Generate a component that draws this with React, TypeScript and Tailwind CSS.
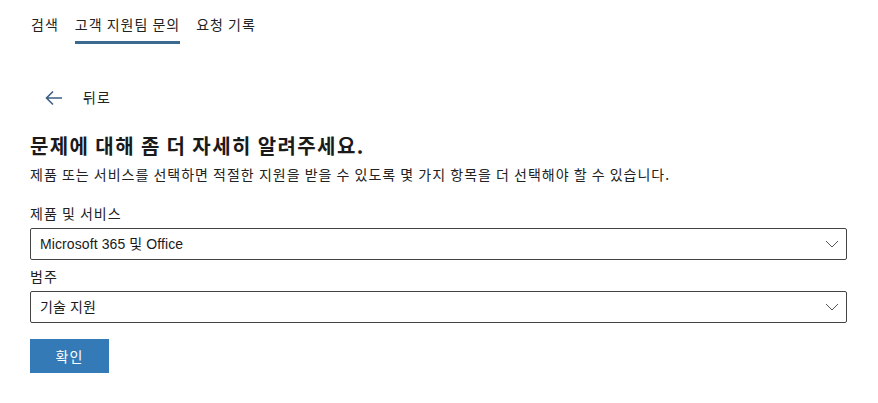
import React, { useState } from 'react';

const font = { fontFamily: '"Noto Sans CJK KR", "Noto Sans", sans-serif' };

const Chevron: React.FC = () => (
  <svg width="14" height="8" viewBox="0 0 14 8" fill="none" className="text-[#555]">
    <path d="M1 1l6 6 6-6" stroke="currentColor" strokeWidth="1" />
  </svg>
);

const SelectBox: React.FC<{ value: string }> = ({ value }) => (
  <div className="flex h-[32px] items-center justify-between rounded-[2px] border border-[#444] px-[9px] text-[14px] text-[#1a1a1a]">
    <span className="font-['Liberation_Sans','Noto_Sans_CJK_KR',sans-serif] tracking-[0.1px]">{value}</span>
    <span className="mr-[-2px]">
      <Chevron />
    </span>
  </div>
);

export default function App() {
  const [tab] = useState('contact');

  const tabs = [
    { id: 'search', label: '검색' },
    { id: 'contact', label: '고객 지원팀 문의' },
    { id: 'history', label: '요청 기록' },
  ];

  return (
    <div className="min-h-[403px] w-[878px] bg-white text-[#1f1f1f]" style={font}>
      <nav className="flex gap-[16px] pl-[31px] pt-[14px]">
        {tabs.map((t) => (
          <div
            key={t.id}
            className={
              'pb-[7px] text-[14px] leading-[20px] tracking-[1px] text-[#222] border-b-[3px] ' +
              (tab === t.id ? 'border-[#3c6a8f]' : 'border-transparent')
            }
          >
            {t.label}
          </div>
        ))}
      </nav>

      <div className="px-[30px] pr-[31px]">
        <button className="mt-[43px] flex items-center gap-[20px] pl-[15px] text-[14px] tracking-[1px] text-[#222]">
          <svg width="18" height="16" viewBox="0 0 18 16" fill="none" className="text-[#3b5f82]">
            <path d="M17 8H2M8 1.5L1.5 8 8 14.5" stroke="currentColor" strokeWidth="1.6" />
          </svg>
          <span>뒤로</span>
        </button>

        <h1 className="mt-[25px] text-[20px] font-bold leading-[26px] tracking-[1.4px] text-[#1a1a1a]">
          문제에 대해 좀 더 자세히 알려주세요.
        </h1>
        <p className="mt-[5px] text-[14px] leading-[20px] tracking-[1px] text-[#222]">
          제품 또는 서비스를 선택하면 적절한 지원을 받을 수 있도록 몇 가지 항목을 더 선택해야 할 수 있습니다.
        </p>

        <label className="mt-[19px] block text-[14px] leading-[20px] tracking-[1px] text-[#222]">제품 및 서비스</label>
        <div className="mt-[5px]">
          <SelectBox value="Microsoft 365 및 Office" />
        </div>

        <label className="mt-[6px] block text-[14px] leading-[20px] tracking-[1px] text-[#222]">범주</label>
        <div className="mt-[5px]">
          <SelectBox value="기술 지원" />
        </div>

        <button className="mt-[16px] h-[34px] w-[79px] bg-[#337ab7] text-[14px] tracking-[1px] text-white">확인</button>
      </div>
    </div>
  );
}
